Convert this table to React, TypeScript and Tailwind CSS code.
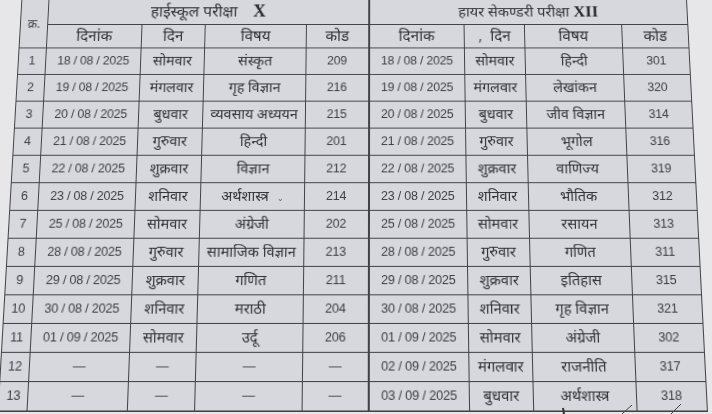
type Row = {
  date: string;
  day: string;
  subject: string;
  code: string;
};

const dash = "—";

const highSchool: Row[] = [
  { date: "18 / 08 / 2025", day: "सोमवार", subject: "संस्कृत", code: "209" },
  { date: "19 / 08 / 2025", day: "मंगलवार", subject: "गृह विज्ञान", code: "216" },
  { date: "20 / 08 / 2025", day: "बुधवार", subject: "व्यवसाय अध्ययन", code: "215" },
  { date: "21 / 08 / 2025", day: "गुरुवार", subject: "हिन्दी", code: "201" },
  { date: "22 / 08 / 2025", day: "शुक्रवार", subject: "विज्ञान", code: "212" },
  { date: "23 / 08 / 2025", day: "शनिवार", subject: "अर्थशास्त्र", code: "214" },
  { date: "25 / 08 / 2025", day: "सोमवार", subject: "अंग्रेजी", code: "202" },
  { date: "28 / 08 / 2025", day: "गुरुवार", subject: "सामाजिक विज्ञान", code: "213" },
  { date: "29 / 08 / 2025", day: "शुक्रवार", subject: "गणित", code: "211" },
  { date: "30 / 08 / 2025", day: "शनिवार", subject: "मराठी", code: "204" },
  { date: "01 / 09 / 2025", day: "सोमवार", subject: "उर्दू", code: "206" },
  { date: dash, day: dash, subject: dash, code: dash },
  { date: dash, day: dash, subject: dash, code: dash },
];

const higherSecondary: Row[] = [
  { date: "18 / 08 / 2025", day: "सोमवार", subject: "हिन्दी", code: "301" },
  { date: "19 / 08 / 2025", day: "मंगलवार", subject: "लेखांकन", code: "320" },
  { date: "20 / 08 / 2025", day: "बुधवार", subject: "जीव विज्ञान", code: "314" },
  { date: "21 / 08 / 2025", day: "गुरुवार", subject: "भूगोल", code: "316" },
  { date: "22 / 08 / 2025", day: "शुक्रवार", subject: "वाणिज्य", code: "319" },
  { date: "23 / 08 / 2025", day: "शनिवार", subject: "भौतिक", code: "312" },
  { date: "25 / 08 / 2025", day: "सोमवार", subject: "रसायन", code: "313" },
  { date: "28 / 08 / 2025", day: "गुरुवार", subject: "गणित", code: "311" },
  { date: "29 / 08 / 2025", day: "शुक्रवार", subject: "इतिहास", code: "315" },
  { date: "30 / 08 / 2025", day: "शनिवार", subject: "गृह विज्ञान", code: "321" },
  { date: "01 / 09 / 2025", day: "सोमवार", subject: "अंग्रेजी", code: "302" },
  { date: "02 / 09 / 2025", day: "मंगलवार", subject: "राजनीति", code: "317" },
  { date: "03 / 09 / 2025", day: "बुधवार", subject: "अर्थशास्त्र", code: "318" },
];

const cell = "border border-[#424246] text-center align-middle p-0";
const num = "font-['Liberation_Sans',Arial,sans-serif] text-[12.5px] tracking-[-0.2px] text-[#3e3e42]";
const hindi = "text-[14.5px] text-[#313135]";

export default function App() {
  return (
    <div className="relative h-[414px] w-[712px] overflow-hidden bg-[#e7e7e9] font-['Noto_Sans','Noto_Sans_Devanagari','Lohit_Devanagari',sans-serif]">
      <div className="-mt-[11px] pl-[10px] [transform:perspective(1000px)_rotateX(9deg)] [transform-origin:376px_207px]">
        <table className="table-fixed border-collapse bg-[#d7d8dd]">
          <colgroup>
            <col className="w-[28px]" />
            <col className="w-[97px]" />
            <col className="w-[65px]" />
            <col className="w-[104px]" />
            <col className="w-[64px]" />
            <col className="w-[98px]" />
            <col className="w-[62px]" />
            <col className="w-[100px]" />
            <col className="w-[68px]" />
          </colgroup>
          <thead>
            <tr className="h-[22px]">
              <th rowSpan={2} className={`${cell} align-top pt-[18px] text-[12.5px] font-normal text-[#3e3e42]`}>
                क्र.
              </th>
              <th colSpan={4} className={`${cell} border-r-2 border-t-0 font-normal`}>
                <span className="text-[16px] text-[#333337]">हाईस्कूल परीक्षा</span>
                <span className="ml-4 font-['Liberation_Serif',serif] text-[18px] font-bold text-[#2a2a2e]">X</span>
              </th>
              <th colSpan={4} className={`${cell} font-normal`}>
                <span className="text-[15px] text-[#333337]">हायर सेकण्डरी परीक्षा</span>
                <span className="ml-1 font-['Liberation_Serif',serif] text-[17px] font-bold text-[#2a2a2e]">XII</span>
              </th>
            </tr>
            <tr className="h-[25px] text-[15.5px] font-normal text-[#333337]">
              <th className={`${cell} font-normal`}>दिनांक</th>
              <th className={`${cell} font-normal`}>दिन</th>
              <th className={`${cell} font-normal`}>विषय</th>
              <th className={`${cell} border-r-2 font-normal`}>कोड</th>
              <th className={`${cell} font-normal`}>दिनांक</th>
              <th className={`${cell} font-normal`}>
                <span className="mr-2 text-[#555]">,</span>दिन
              </th>
              <th className={`${cell} font-normal`}>विषय</th>
              <th className={`${cell} font-normal`}>कोड</th>
            </tr>
          </thead>
          <tbody>
            {highSchool.map((left, i) => {
              const right = higherSecondary[i];
              return (
                <tr key={i} className="h-[28px]">
                  <td className={`${cell} ${num}`}>{i + 1}</td>
                  <td className={`${cell} ${num}`}>{left.date}</td>
                  <td className={`${cell} ${left.day === dash ? num : hindi}`}>{left.day}</td>
                  <td className={`${cell} ${left.subject === dash ? num : hindi}`}>
                    {left.subject}
                    {i === 5 && <span className="ml-2 text-[8px] text-[#555]">⌄</span>}
                  </td>
                  <td className={`${cell} ${num} border-r-2`}>{left.code}</td>
                  <td className={`${cell} ${num}`}>{right.date}</td>
                  <td className={`${cell} ${hindi}`}>{right.day}</td>
                  <td className={`${cell} ${hindi}`}>{right.subject}</td>
                  <td className={`${cell} ${num}`}>{right.code}</td>
                </tr>
              );
            })}
          </tbody>
        </table>
      </div>
      <svg className="absolute bottom-0 left-0" width="712" height="10" viewBox="0 404 712 10">
        <path d="M563 408 L564 414" stroke="#333" strokeWidth="2" />
        <path d="M622 414 L632 405" stroke="#444" strokeWidth="1" />
        <path d="M671 414 L681 404" stroke="#444" strokeWidth="1" />
      </svg>
    </div>
  );
}
